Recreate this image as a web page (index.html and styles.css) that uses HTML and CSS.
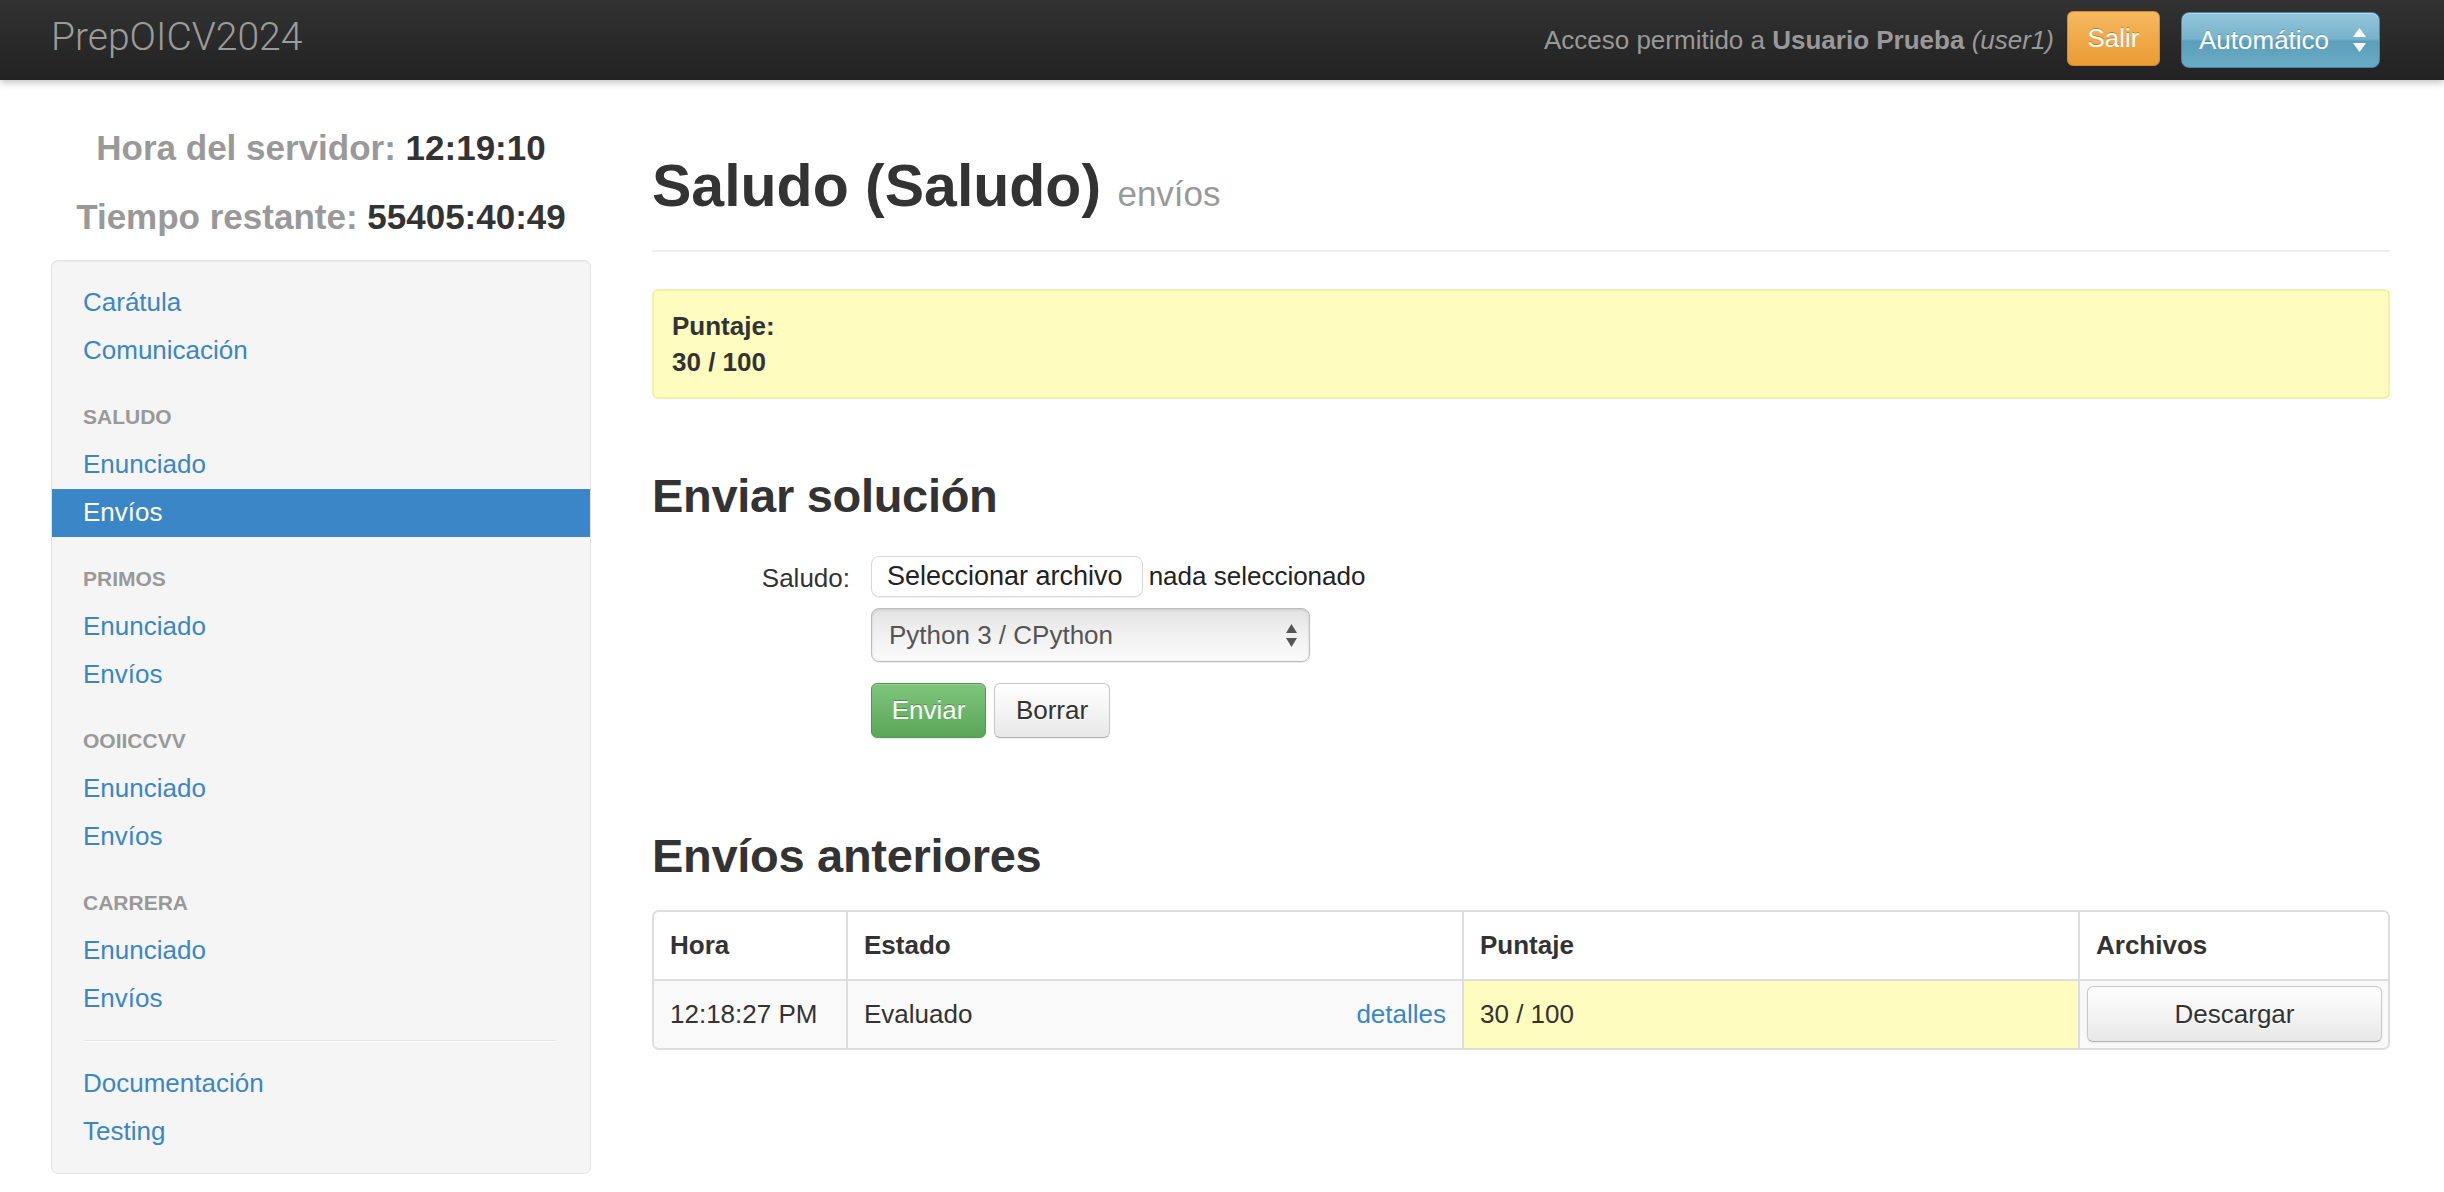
FILE: index.html
```html
<!DOCTYPE html>
<html lang="es">
<head>
<meta charset="utf-8">
<title>PrepOICV2024</title>
<link rel="stylesheet" href="styles.css">
</head>
<body>
<header class="navbar">
  <a class="brand">PrepOICV2024</a>
  <div class="nav-right">
    <span class="user-info">Acceso permitido a <b>Usuario Prueba</b> <i>(user1)</i></span>
    <a class="btn-salir">Salir</a>
    <div class="lang-select">
      <span>Automático</span>
      <svg class="arrows" width="13" height="24" viewBox="0 0 13 24"><polygon points="6.5,0 13,9 0,9" fill="#fff"/><polygon points="0,15 13,15 6.5,24" fill="#fff"/></svg>
    </div>
  </div>
</header>

<div class="container">
  <aside class="sidebar">
    <div class="clock"><span class="clock-label">Hora del servidor:</span> <span class="clock-value">12:19:10</span></div>
    <div class="clock"><span class="clock-label">Tiempo restante:</span> <span class="clock-value">55405:40:49</span></div>
    <nav class="well">
      <ul class="nav-list">
        <li><a>Carátula</a></li>
        <li><a>Comunicación</a></li>
        <li class="nav-header">Saludo</li>
        <li><a>Enunciado</a></li>
        <li class="active"><a>Envíos</a></li>
        <li class="nav-header">Primos</li>
        <li><a>Enunciado</a></li>
        <li><a>Envíos</a></li>
        <li class="nav-header">ooiiccvv</li>
        <li><a>Enunciado</a></li>
        <li><a>Envíos</a></li>
        <li class="nav-header">Carrera</li>
        <li><a>Enunciado</a></li>
        <li><a>Envíos</a></li>
        <li class="divider"></li>
        <li><a>Documentación</a></li>
        <li><a>Testing</a></li>
      </ul>
    </nav>
  </aside>

  <main class="content">
    <div class="page-header">
      <h1>Saludo (Saludo) <small>envíos</small></h1>
    </div>

    <div class="alert">
      <strong>Puntaje:</strong><br>
      <strong>30 / 100</strong>
    </div>

    <h2>Enviar solución</h2>
    <form class="submit-form">
      <div class="control-group">
        <label class="control-label">Saludo:</label>
        <div class="controls">
          <div class="file-row">
            <span class="file-btn">Seleccionar archivo</span>
            <span class="file-name">nada seleccionado</span>
          </div>
          <div class="fake-select">
            <span>Python 3 / CPython</span>
            <svg class="arrows" width="11" height="23" viewBox="0 0 11 23"><polygon points="5.5,0 11,9 0,9" fill="#555"/><polygon points="0,14 11,14 5.5,23" fill="#555"/></svg>
          </div>
          <div class="form-buttons">
            <span class="btn btn-success">Enviar</span>
            <span class="btn">Borrar</span>
          </div>
        </div>
      </div>
    </form>

    <h2 class="h2-prev">Envíos anteriores</h2>
    <table class="submissions">
      <thead>
        <tr>
          <th class="c-time">Hora</th>
          <th class="c-status">Estado</th>
          <th class="c-score">Puntaje</th>
          <th class="c-files">Archivos</th>
        </tr>
      </thead>
      <tbody>
        <tr>
          <td class="c-time">12:18:27 PM</td>
          <td class="c-status"><div class="status-inner"><span>Evaluado</span><a class="details">detalles</a></div></td>
          <td class="c-score score-cell">30 / 100</td>
          <td class="c-files files-cell"><span class="btn btn-block">Descargar</span></td>
        </tr>
      </tbody>
    </table>
  </main>
</div>
</body>
</html>
```

FILE: styles.css
```css
* { box-sizing: border-box; }

html, body {
  margin: 0;
  padding: 0;
  background: #fff;
}

body {
  font-family: "Liberation Sans", Arial, Helvetica, sans-serif;
  font-size: 26px;
  line-height: 37px;
  color: #333;
}

a { color: #3a86c7; text-decoration: none; }

/* ---------- navbar ---------- */
.navbar {
  height: 80px;
  background: linear-gradient(#323232, #222);
  box-shadow: 0 2px 8px rgba(0, 0, 0, 0.28);
  display: flex;
  align-items: center;
  justify-content: space-between;
  padding: 0 64px 0 51px;
  position: relative;
  z-index: 2;
}

.brand {
  font-family: "Roboto", "Liberation Sans", sans-serif;
  font-weight: 300;
  font-size: 39px;
  color: #9b9b9b;
  letter-spacing: 0;
  margin-top: -6px;
}

.nav-right {
  display: flex;
  align-items: center;
}

.user-info {
  color: #999;
  font-size: 26px;
}
.user-info b { font-weight: bold; }
.user-info i { font-style: italic; }

.btn-salir {
  display: flex;
  align-items: center;
  justify-content: center;
  width: 93px;
  height: 55px;
  margin-left: 13px;
  margin-top: -4px;
  border-radius: 6px;
  border: 1px solid #d6882a;
  background: linear-gradient(#f6b85f, #eb9b35);
  color: #fff;
  text-shadow: 0 -1px 0 rgba(0, 0, 0, 0.25);
  font-size: 26px;
}

.lang-select {
  display: flex;
  align-items: center;
  justify-content: space-between;
  width: 199px;
  height: 56px;
  margin-left: 21px;
  padding: 0 13px 0 17px;
  border-radius: 8px;
  border: 1px solid #3e8aa8;
  background: linear-gradient(#93c6db 0%, #77b3cc 48%, #5c9fbb 52%, #6aaac4 100%);
  box-shadow: inset 0 1px 0 rgba(255, 255, 255, 0.35);
  color: #fff;
  font-size: 26px;
  text-shadow: 0 -1px 0 rgba(0, 0, 0, 0.2);
}

/* ---------- layout ---------- */
.container {
  display: flex;
  gap: 61px;
  padding: 0 54px 0 51px;
}

.sidebar {
  width: 540px;
  flex: 0 0 540px;
  padding-top: 43px;
}

.clock {
  text-align: center;
  font-weight: bold;
  font-size: 35px;
  line-height: 50px;
  margin-bottom: 19px;
  white-space: nowrap;
}
.clock-label { color: #999; }
.clock-value { color: #333; }

.well {
  margin-top: -1px;
  background: #f5f5f5;
  border: 1px solid #e3e3e3;
  border-radius: 7px;
  box-shadow: inset 0 1px 1px rgba(0, 0, 0, 0.04);
  padding: 18px 0 17px;
}

.nav-list {
  list-style: none;
  margin: 0;
  padding: 0;
}

.nav-list li a {
  display: block;
  padding: 5px 20px 6px 31px;
  line-height: 37px;
  color: #3a86c7;
}

.nav-list li.active a {
  background: #3b86c6;
  color: #fff;
}

.nav-list .nav-header {
  margin-top: 18px;
  padding: 5px 20px 6px 31px;
  line-height: 37px;
  font-size: 21px;
  font-weight: bold;
  color: #999;
  text-transform: uppercase;
}

.nav-list .divider {
  height: 2px;
  margin: 17px 34px 18px 32px;
  background: #e3e3e3;
  border-bottom: 1px solid #fff;
}

.content {
  flex: 1 1 auto;
  min-width: 0;
}

/* ---------- headings ---------- */
.page-header {
  margin-top: 71px;
  padding-bottom: 21px;
  border-bottom: 2px solid #eee;
}

h1 {
  margin: 0;
  font-size: 59px;
  line-height: 70px;
  font-weight: bold;
  color: #333;
  letter-spacing: 0;
}

h1 small {
  font-size: 35px;
  font-weight: normal;
  color: #999;
  letter-spacing: 0;
}

.alert {
  margin-top: 37px;
  background: #fefcbe;
  border: 2px solid #f3efa6;
  border-radius: 6px;
  padding: 17px 18px;
  line-height: 36px;
  font-weight: bold;
  color: #333;
}

h2 {
  margin: 69px 0 0;
  font-size: 47px;
  line-height: 56px;
  font-weight: bold;
  color: #333;
  letter-spacing: -0.3px;
}

/* ---------- form ---------- */
.submit-form {
  margin-top: 32px;
}

.control-group {
  display: flex;
}

.control-label {
  width: 198px;
  flex: 0 0 198px;
  text-align: right;
  margin-right: 21px;
  line-height: 41px;
  padding-top: 2px;
  color: #333;
}

.controls {
  display: flex;
  flex-direction: column;
}

.file-row {
  display: flex;
  align-items: center;
  height: 41px;
}

.file-btn {
  display: flex;
  align-items: center;
  height: 41px;
  padding: 0 19px 0 15px;
  border: 1px solid #d8d8d8;
  border-radius: 8px;
  background: #fff;
  box-shadow: 0 1px 1px rgba(0, 0, 0, 0.06);
  color: #222;
  font-size: 27px;
}

.file-name {
  margin-left: 6px;
  color: #222;
}

.fake-select {
  display: flex;
  align-items: center;
  justify-content: space-between;
  width: 439px;
  height: 54px;
  margin-top: 11px;
  padding: 0 12px 0 17px;
  border: 1px solid #bdbdbd;
  border-radius: 8px;
  background: linear-gradient(#e4e4e4, #f3f3f3 60%, #fbfbfb);
  box-shadow: inset 0 1px 3px rgba(0, 0, 0, 0.12), 0 1px 1px rgba(0, 0, 0, 0.08);
  color: #555;
}

.form-buttons {
  display: flex;
  gap: 8px;
  margin-top: 21px;
}

.btn {
  display: inline-flex;
  align-items: center;
  justify-content: center;
  height: 55px;
  width: 116px;
  border: 1px solid #c8c8c8;
  border-bottom-color: #b3b3b3;
  border-radius: 6px;
  background: linear-gradient(#ffffff, #e8e8e8);
  box-shadow: inset 0 1px 0 rgba(255, 255, 255, 0.2), 0 1px 2px rgba(0, 0, 0, 0.08);
  color: #333;
  text-shadow: 0 1px 1px rgba(255, 255, 255, 0.75);
}

.btn-success {
  width: 115px;
  border-color: #4e9a4c;
  background: linear-gradient(#7ec57c, #5aa658);
  color: #fff;
  text-shadow: 0 -1px 0 rgba(0, 0, 0, 0.25);
}

/* ---------- table ---------- */
.h2-prev {
  margin-top: 90px;
}

.submissions {
  margin-top: 26px;
  width: 100%;
  table-layout: fixed;
  border-collapse: separate;
  border-spacing: 0;
  border: 2px solid #ddd;
  border-radius: 7px;
}

.submissions th,
.submissions td {
  text-align: left;
  padding: 15px 16px;
  line-height: 37px;
  vertical-align: middle;
  box-sizing: border-box;
}

.submissions th {
  font-weight: bold;
  background: #fff;
}

.submissions th + th,
.submissions td + td {
  border-left: 2px solid #ddd;
}

.submissions td {
  border-top: 2px solid #ddd;
  background: #f9f9f9;
}

.submissions th:first-child { border-top-left-radius: 5px; }
.submissions th:last-child { border-top-right-radius: 5px; }
.submissions td:first-child { border-bottom-left-radius: 5px; }
.submissions td:last-child { border-bottom-right-radius: 5px; }

.c-time { width: 192px; }
.c-status { width: 616px; }
.c-score { width: 616px; }
.c-files { width: 310px; }

.status-inner {
  display: flex;
  justify-content: space-between;
}

.submissions td.score-cell {
  background: #fefcbe;
}

.submissions td.files-cell {
  padding: 5px 6px 6px 7px;
}

.btn-block {
  width: 100%;
  height: 56px;
}
```
